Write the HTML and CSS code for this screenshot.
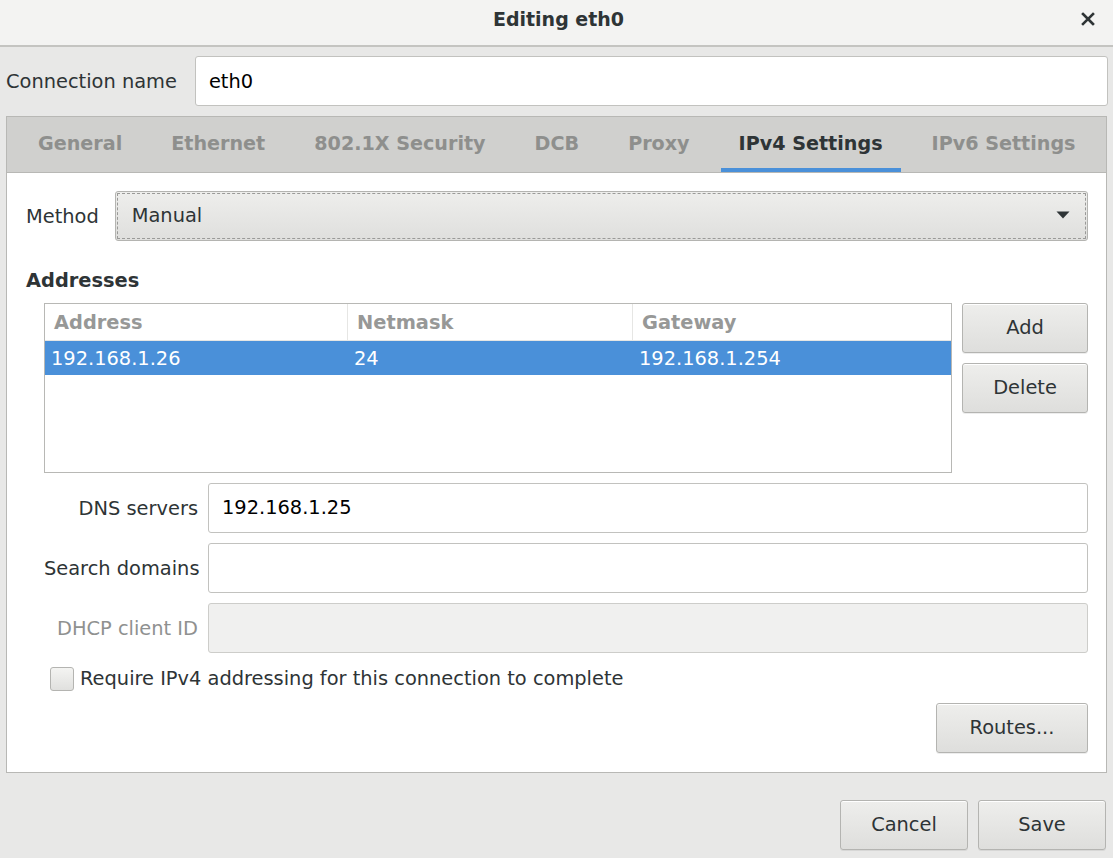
FILE: index.html
```html
<!DOCTYPE html>
<html>
<head>
<meta charset="utf-8">
<link rel="stylesheet" href="styles.css">
</head>
<body>
<div class="window">
  <div class="titlebar">
    <div class="title">Editing eth0</div>
    <div class="close"><svg width="14" height="14" viewBox="0 0 14 14"><path d="M2 2 L12 12 M12 2 L2 12" stroke="#2e3436" stroke-width="2.6" stroke-linecap="square"/></svg></div>
  </div>
  <div class="main">
    <div class="conn-row">
      <span class="label">Connection name</span>
      <div class="entry">eth0</div>
    </div>
    <div class="notebook">
      <div class="tabs">
        <div class="tab">General</div>
        <div class="tab">Ethernet</div>
        <div class="tab">802.1X Security</div>
        <div class="tab">DCB</div>
        <div class="tab">Proxy</div>
        <div class="tab active">IPv4 Settings</div>
        <div class="tab">IPv6 Settings</div>
      </div>
      <div class="page">
        <div class="method-row">
          <span class="label">Method</span>
          <div class="combo">
            <span>Manual</span>
            <svg class="arrow" width="14" height="8" viewBox="0 0 14 8"><path d="M0.5 0.5 H13.5 L7 7.5 Z" fill="#2e3436"/></svg>
          </div>
        </div>
        <div class="section-title">Addresses</div>
        <div class="addr-area">
          <div class="table">
            <div class="thead">
              <div class="th c1">Address</div>
              <div class="th c2">Netmask</div>
              <div class="th c3">Gateway</div>
            </div>
            <div class="trow selected">
              <div class="td c1">192.168.1.26</div>
              <div class="td c2">24</div>
              <div class="td c3">192.168.1.254</div>
            </div>
          </div>
          <div class="side-buttons">
            <div class="button">Add</div>
            <div class="button">Delete</div>
          </div>
        </div>
        <div class="form">
          <span class="flabel">DNS servers</span>
          <div class="entry">192.168.1.25</div>
          <span class="flabel">Search domains</span>
          <div class="entry"></div>
          <span class="flabel disabled">DHCP client ID</span>
          <div class="entry disabled"></div>
        </div>
        <div class="check-row">
          <span class="checkbox"></span>
          <span class="check-label">Require IPv4 addressing for this connection to complete</span>
        </div>
        <div class="routes-row">
          <div class="button routes">Routes...</div>
        </div>
      </div>
    </div>
    <div class="actions">
      <div class="button action">Cancel</div>
      <div class="button action">Save</div>
    </div>
  </div>
</div>
</body>
</html>
```
FILE: styles.css
```css
* { box-sizing: border-box; }
html, body { margin: 0; padding: 0; }
body {
  background: #e8e8e7;
  font-family: "DejaVu Sans", sans-serif;
  font-size: 19.4px;
  color: #2e3436;
  width: 1113px;
  height: 858px;
  overflow: hidden;
}
.window { width: 1113px; height: 858px; }
.titlebar {
  height: 47px;
  background: #f3f3f2;
  border-bottom: 2px solid #c4c4c1;
  display: flex;
  align-items: center;
  justify-content: center;
  position: relative;
}
.title { font-weight: bold; font-size: 19px; padding-bottom: 7px; padding-left: 4px; }
.close {
  position: absolute;
  right: 18px;
  top: 12px;
  width: 14px;
  height: 14px;
  display: flex;
}
.main { padding: 9px 5px 0 6px; }
.conn-row {
  display: flex;
  align-items: center;
  gap: 18px;
}
.entry {
  flex: 1;
  height: 50px;
  background: #ffffff;
  border: 1px solid #c2c2bf;
  border-radius: 3px;
  display: flex;
  align-items: center;
  padding: 0 13px;
  color: #000;
}
.notebook {
  margin-top: 10px;
  margin-right: 1px;
  border: 1px solid #b8b8b5;
  background: #ffffff;
}
.tabs {
  height: 56px;
  background: #d0d0ce;
  border-bottom: 1px solid #b8b8b5;
  display: flex;
  align-items: stretch;
  padding-left: 13px;
  gap: 13px;
}
.tab {
  padding: 0 18px;
  display: flex;
  align-items: center;
  font-weight: bold;
  font-size: 19.15px;
  color: #8e8f8d;
  border-bottom: 4px solid transparent;
  padding-top: 2px;
}
.tab.active {
  color: #2e3436;
  border-bottom-color: #4a90d9;
}
.page { padding: 18px 18px 19px 19px; }
.method-row {
  display: flex;
  align-items: center;
  gap: 16px;
}
.combo {
  flex: 1;
  height: 50px;
  border: 1px solid #b4b4b1;
  border-radius: 3px;
  background: linear-gradient(#eeeeec, #dfdfdd);
  outline: 1px dashed #9a9a98;
  outline-offset: -3px;
  display: flex;
  align-items: center;
  justify-content: space-between;
  padding: 0 17px 2px 16px;
}
.section-title {
  font-weight: bold;
  margin-top: 28px;
  height: 24px;
  line-height: 24px;
}
.addr-area {
  display: flex;
  gap: 10px;
  margin-top: 10px;
  padding-left: 18px;
}
.table {
  width: 908px;
  height: 170px;
  border: 1px solid #b8b8b5;
  background: #fff;
}
.thead, .trow { display: flex; }
.thead { height: 37px; }
.trow { height: 34px; }
.th, .td { display: flex; align-items: center; }
.c1 { width: 303px; }
.c2 { width: 285px; }
.c3 { flex: 1; }
.th {
  font-weight: bold;
  color: #979897;
  padding-left: 9px;
  border-right: 1px solid #e6e6e4;
  border-bottom: 1px solid #e6e6e4;
}
.th.c3 { border-right: none; }
.td { padding-left: 6px; }
.trow.selected { background: #4a90d9; color: #ffffff; }
.side-buttons {
  flex: 1;
  display: flex;
  flex-direction: column;
  gap: 10px;
}
.button {
  height: 50px;
  border: 1px solid #b4b4b1;
  border-radius: 3px;
  background: linear-gradient(#eeeeec, #dededc);
  box-shadow: inset 0 1px #ffffff, 0 1px rgba(0,0,0,0.07);
  display: flex;
  align-items: center;
  justify-content: center;
  color: #2e3436;
  padding-bottom: 2px;
}
.form {
  display: grid;
  grid-template-columns: 154px 1fr;
  column-gap: 10px;
  row-gap: 10px;
  align-items: center;
  margin-top: 10px;
  padding-left: 18px;
}
.flabel { text-align: right; white-space: nowrap; }
.flabel.disabled { color: #8f9190; }
.form .entry { padding-left: 13px; padding-bottom: 2px; }
.entry.disabled { background: #f0f0ef; border-color: #cdcdca; }
.check-row {
  display: flex;
  align-items: center;
  margin-top: 13px;
  padding-left: 24px;
  height: 25px;
}
.checkbox {
  width: 24px;
  height: 24px;
  border: 1px solid #b4b4b1;
  border-radius: 3px;
  background: linear-gradient(#f4f4f2, #e0e0de);
  margin-right: 6px;
}
.routes-row {
  display: flex;
  justify-content: flex-end;
  margin-top: 12px;
}
.button.routes { width: 152px; }
.actions {
  display: flex;
  justify-content: flex-end;
  gap: 10px;
  margin-top: 27px;
  padding-right: 2px;
}
.button.action { width: 128px; height: 50px; }
```
